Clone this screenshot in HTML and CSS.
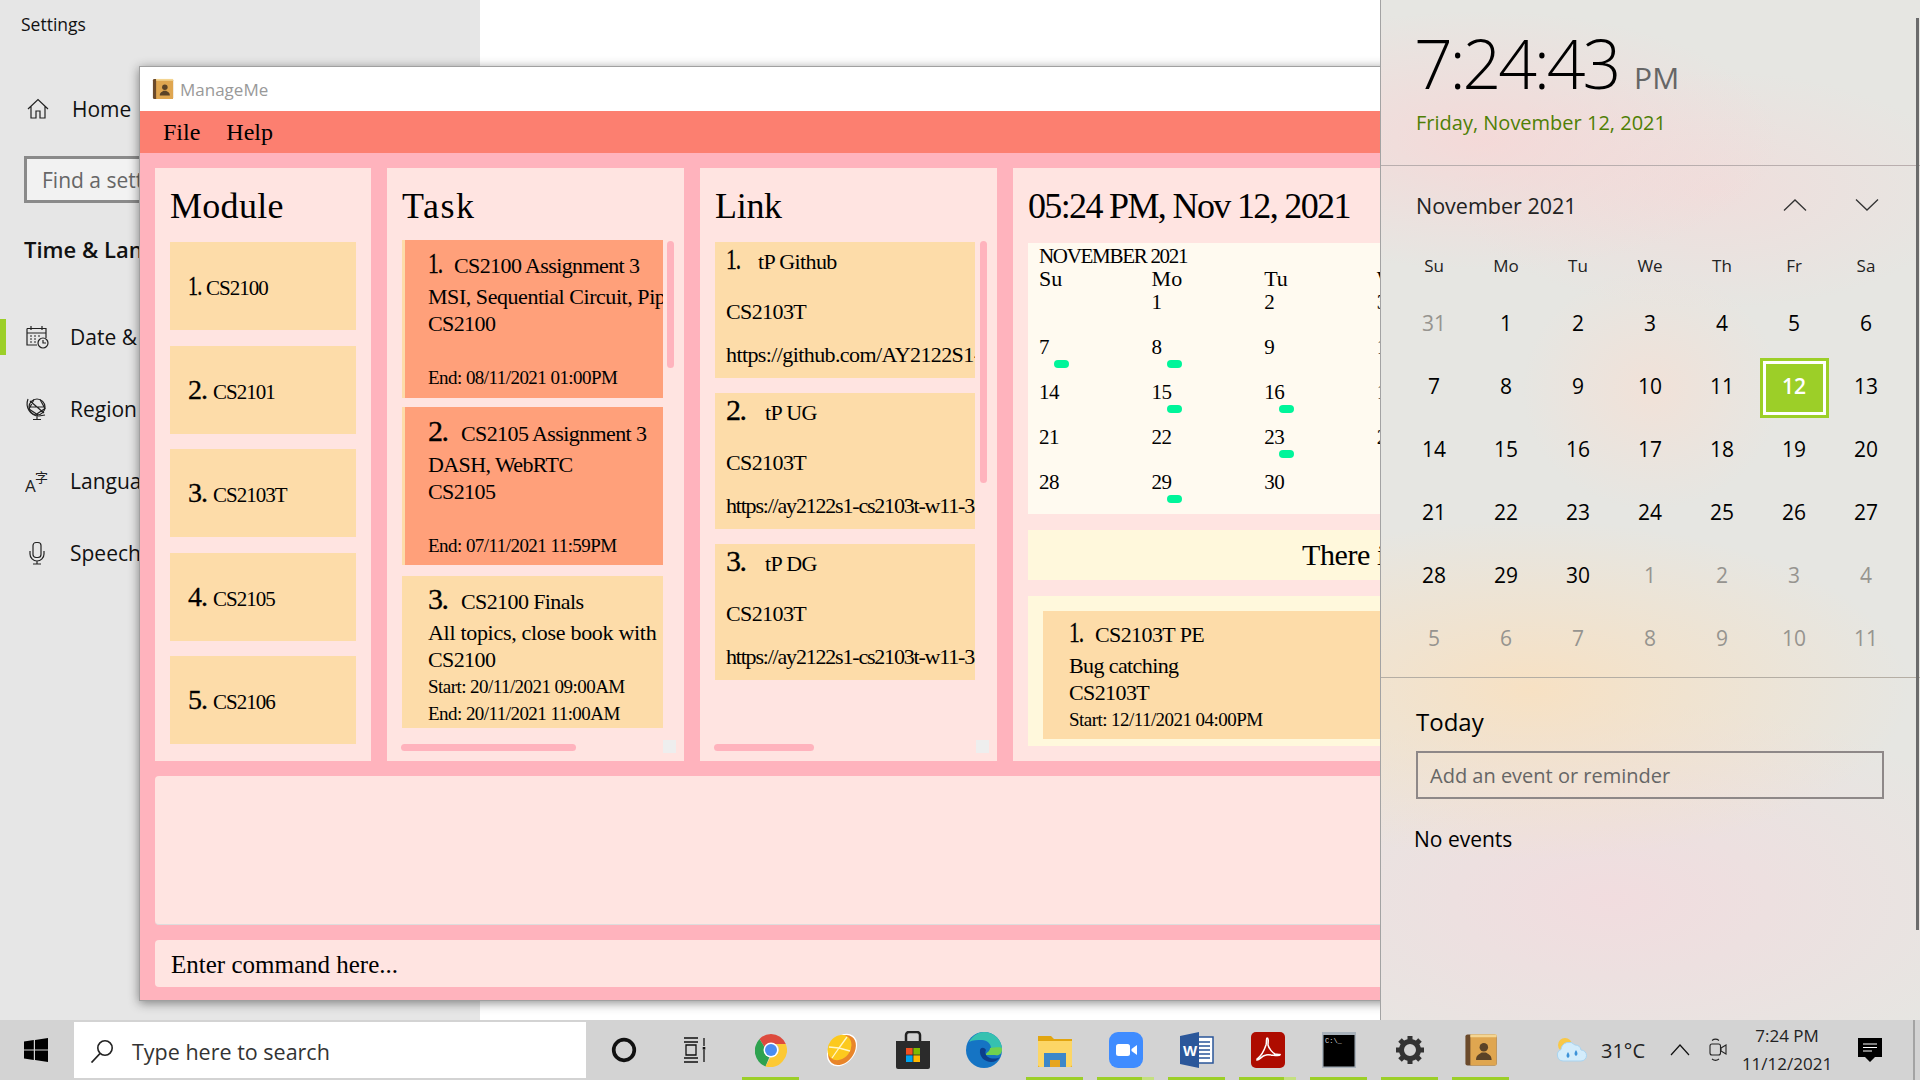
FILE: index.html
```html
<!DOCTYPE html>
<html lang="en">
  <head>
    <meta charset="UTF-8" />
    <meta name="viewport" content="width=device-width, initial-scale=1.0" />
    <title>ManageMe</title>
    <link rel="stylesheet" href="styles.css">
  </head>
  <body>
    <svg class="defs" aria-hidden="true">
      <symbol id="book" viewBox="0 0 24 24">
        <rect x="1" y="1" width="22" height="22" rx="1.5" fill="#6b4a2b" />
        <rect x="4.500" y="1" width="18.500" height="22" rx="1" fill="#dfa650" />
        <rect x="4.500" y="1" width="18.500" height="2" fill="#f4d592" />
        <circle cx="14" cy="10" r="3" fill="#5b4327" />
        <path d="M8.500 19c0-3.500 2.500-4 4-5.200h3c1.500 1.200 4 1.700 4 5.200z" fill="#5b4327" />
      </symbol>
    </svg>

    <!-- Settings behind everything -->
    <aside class="settings">
      <div class="settings-title">Settings</div>
      <div class="settings-home">
        <svg class="set-icon" viewBox="0 0 24 24"><path d="M2 12 12 2.500 22 12M5 9.500V21h5v-7h4v7h5V9.500" /></svg>
        <span>Home</span>
      </div>
      <div class="settings-search">Find a setting</div>
      <div class="settings-group">Time &amp; Language</div>
      <nav class="settings-nav">
        <div class="nav-row active">
          <svg class="set-icon" viewBox="0 0 24 24"><path d="M2 3.500h19V13M2 3.500V20h10M2 8h19M6 1v4M17 1v4" /><circle cx="18" cy="18" r="5" /><path d="M18 15v3h3M5 11h2M9 11h2M13 11h2M5 14h2M9 14h2M5 17h2M9 17h2" /></svg>
          <span>Date &amp; time</span>
        </div>
        <div class="nav-row">
          <svg class="set-icon" viewBox="0 0 24 24"><circle cx="12" cy="10" r="8" /><path d="M5 4 19 16M9 2.500 4 12l9 6M15 2.500l5 9-9 6M4 10h16M3 2c-3 8 2 17 11 17l6-1M12 19v3M8 22.500h8" /></svg>
          <span>Region</span>
        </div>
        <div class="nav-row">
          <svg class="set-icon lang-icon" viewBox="0 0 24 24"><text x="0" y="23" class="lang-a">A</text><text x="10" y="13" class="lang-zi">字</text></svg>
          <span>Language</span>
        </div>
        <div class="nav-row">
          <svg class="set-icon" viewBox="0 0 24 24"><rect x="8" y="1.500" width="8" height="15" rx="3" /><path d="M5 10v3a6.500 6.500 0 0 0 14 0v-3M12 19.500V23M8 23h8" /></svg>
          <span>Speech</span>
        </div>
      </nav>
    </aside>

    <!-- ManageMe window -->
    <main class="window">
      <header class="titlebar">
        <svg class="title-icon"><use href="#book" /></svg>
        <span>ManageMe</span>
      </header>
      <div class="menubar">
        <span>File</span>
        <span>Help</span>
      </div>
      <div class="app-body">
        <div class="panels">
          <section class="panel module-panel">
            <h2>Module</h2>
            <div class="module-card"><span class="m-num one">1.</span><span class="m-name">CS2100</span></div>
            <div class="module-card"><span class="m-num">2.</span><span class="m-name">CS2101</span></div>
            <div class="module-card"><span class="m-num">3.</span><span class="m-name">CS2103T</span></div>
            <div class="module-card"><span class="m-num">4.</span><span class="m-name">CS2105</span></div>
            <div class="module-card"><span class="m-num">5.</span><span class="m-name">CS2106</span></div>
          </section>

          <section class="panel task-panel">
            <h2>Task</h2>
            <div class="task-list">
              <div class="task overdue">
                <div class="row"><span class="num one">1.</span><span class="row-title">CS2100 Assignment 3</span></div>
                <div class="line desc">MSI, Sequential Circuit, Pipeline</div>
                <div class="line">CS2100</div>
                <div class="line"></div>
                <div class="line small">End: 08/11/2021 01:00PM</div>
              </div>
              <div class="task overdue">
                <div class="row"><span class="num">2.</span><span class="row-title">CS2105 Assignment 3</span></div>
                <div class="line">DASH, WebRTC</div>
                <div class="line">CS2105</div>
                <div class="line"></div>
                <div class="line small">End: 07/11/2021 11:59PM</div>
              </div>
              <div class="task plain">
                <div class="row"><span class="num">3.</span><span class="row-title">CS2100 Finals</span></div>
                <div class="line wide">All topics, close book with</div>
                <div class="line">CS2100</div>
                <div class="line small">Start: 20/11/2021 09:00AM</div>
                <div class="line small">End: 20/11/2021 11:00AM</div>
              </div>
            </div>
            <div class="vbar task-vbar"></div>
            <div class="hbar task-hbar"></div>
            <div class="corner"></div>
          </section>

          <section class="panel link-panel">
            <h2>Link</h2>
            <div class="link-card">
              <div class="link-row"><span class="num one">1.</span><span class="row-title">tP Github</span></div>
              <div class="line">CS2103T</div>
              <div class="line url">https://github.com/AY2122S1-CS2103T-W11-3/tp</div>
            </div>
            <div class="link-card">
              <div class="link-row"><span class="num">2.</span><span class="row-title">tP UG</span></div>
              <div class="line">CS2103T</div>
              <div class="line url tight">https://ay2122s1-cs2103t-w11-3.github.io/tp/UserGuide.html</div>
            </div>
            <div class="link-card">
              <div class="link-row"><span class="num">3.</span><span class="row-title">tP DG</span></div>
              <div class="line">CS2103T</div>
              <div class="line url tight">https://ay2122s1-cs2103t-w11-3.github.io/tp/DeveloperGuide.html</div>
            </div>
            <div class="vbar link-vbar"></div>
            <div class="hbar link-hbar"></div>
            <div class="corner"></div>
          </section>

          <section class="panel date-panel">
            <h2 class="now">05:24 PM, Nov 12, 2021</h2>
            <div class="app-cal">
              <div class="app-cal-month">NOVEMBER 2021</div>
              <div class="app-cal-grid">
                <b>Su</b><b>Mo</b><b>Tu</b><b>We</b><b>Th</b><b>Fr</b><b>Sa</b>
                <i></i><i>1</i><i>2</i><i>3</i><i>4</i><i>5</i><i>6</i>
                <i>7<u></u></i><i>8<u></u></i><i>9</i><i>10</i><i>11</i><i>12</i><i>13</i>
                <i>14</i><i>15<u></u></i><i>16<u></u></i><i>17</i><i>18</i><i>19</i><i>20</i>
                <i>21</i><i>22</i><i>23<u></u></i><i>24</i><i>25</i><i>26</i><i>27</i>
                <i>28</i><i>29<u></u></i><i>30</i>
              </div>
            </div>
            <div class="banner">There is 1 event today</div>
            <div class="events">
              <div class="event-card">
                <div class="row"><span class="num one">1.</span><span class="row-title">CS2103T PE</span></div>
                <div class="line">Bug catching</div>
                <div class="line">CS2103T</div>
                <div class="line small">Start: 12/11/2021 04:00PM</div>
              </div>
            </div>
          </section>
        </div>
        <div class="result"></div>
        <div class="command">Enter command here...</div>
      </div>
    </main>

    <!-- Clock flyout -->
    <aside class="flyout">
      <div class="clock">
        <div class="clock-time">7:24:43<span class="clock-pm">PM</span></div>
        <div class="clock-date">Friday, November 12, 2021</div>
      </div>
      <div class="month-row">
        <span>November 2021</span>
        <div class="month-nav">
          <svg viewBox="0 0 24 12"><path d="M1 11.500 12 1l11 10.500" /></svg>
          <svg viewBox="0 0 24 12"><path d="M1 .5 12 11 23 .5" /></svg>
        </div>
      </div>
      <div class="week-head">
        <span>Su</span><span>Mo</span><span>Tu</span><span>We</span><span>Th</span><span>Fr</span><span>Sa</span>
      </div>
      <div class="days">
        <span class="off">31</span><span>1</span><span>2</span><span>3</span><span>4</span><span>5</span><span>6</span>
        <span>7</span><span>8</span><span>9</span><span>10</span><span>11</span><span class="today">12</span><span>13</span>
        <span>14</span><span>15</span><span>16</span><span>17</span><span>18</span><span>19</span><span>20</span>
        <span>21</span><span>22</span><span>23</span><span>24</span><span>25</span><span>26</span><span>27</span>
        <span>28</span><span>29</span><span>30</span><span class="off">1</span><span class="off">2</span><span class="off">3</span><span class="off">4</span>
        <span class="off">5</span><span class="off">6</span><span class="off">7</span><span class="off">8</span><span class="off">9</span><span class="off">10</span><span class="off">11</span>
      </div>
      <div class="agenda">
        <div class="agenda-title">Today</div>
        <div class="agenda-input">Add an event or reminder</div>
        <div class="agenda-empty">No events</div>
      </div>
      <div class="flyout-edge"></div>
    </aside>

    <!-- Taskbar -->
    <footer class="taskbar">
      <div class="start">
        <svg viewBox="0 0 24 24" width="24" height="24"><path d="M0 3.400 9.800 2v9.500H0zM11 1.900 24 0v11.500H11zM0 12.600h9.800V22L0 20.600zM11 12.600h13V24l-13-1.900z" fill="#000" /></svg>
      </div>
      <div class="search">
        <svg viewBox="0 0 24 24" width="24" height="24"><circle cx="15" cy="9" r="7.200" fill="none" stroke="#222" stroke-width="1.600" /><path d="M10 14.500 1.500 23.500" stroke="#222" stroke-width="1.800" /></svg>
        <span>Type here to search</span>
      </div>
      <div class="slot first">
        <svg viewBox="0 0 24 24" width="26" height="26"><circle cx="12" cy="12" r="9.500" fill="none" stroke="#111" stroke-width="3.400" /></svg>
      </div>
      <div class="slot">
        <svg viewBox="0 0 24 26" width="24" height="26" fill="none" stroke="#111" stroke-width="1.300"><path d="M1 1h14M1 25h14M1 5h14M1 21h14M3 8h10v10H3zM21 1v8M21 13v12" /><rect x="19.700" y="10" width="2.600" height="2.600" fill="#111" stroke="none" /></svg>
      </div>

      <div class="slot app open chrome">
        <svg viewBox="0 0 32 34" width="32" height="34">
          <path d="M16 1a16 16 0 0 1 14.800 10H16a6 6 0 0 0-6 4L4.500 6A16 16 0 0 1 16 1z" fill="#dd4b3e" />
          <path d="M4.500 6 10 15a6 6 0 0 0 5 7.500l-4.500 11A17 17 0 0 1 4.500 6z" fill="#2ea24f" />
          <path d="M30.800 11A17 17 0 0 1 10.500 33.500L16 23a6.500 6.500 0 0 0 4.500-12z" fill="#fcc934" />
          <circle cx="16" cy="17" r="7.500" fill="#fff" /><circle cx="16" cy="17" r="6" fill="#4a8df0" />
        </svg>
      </div>
      <div class="slot app">
        <svg viewBox="0 0 36 36" width="36" height="36">
          <ellipse cx="18" cy="18" rx="13" ry="18" transform="rotate(38 18 18)" fill="#fff" />
          <ellipse cx="18" cy="18" rx="12" ry="16.500" transform="rotate(38 18 18)" fill="#e8852a" />
          <ellipse cx="15.500" cy="15.500" rx="11" ry="13.500" transform="rotate(38 15.500 15.500)" fill="#fcc91e" />
          <path d="M15 16 23 5M15 16 5 15M15 16 8 26M15 16l11 3" stroke="#fff6c8" stroke-width="1.300" />
        </svg>
      </div>
      <div class="slot app">
        <svg viewBox="0 0 36 38" width="36" height="38">
          <path d="M11 11V4a3 3 0 0 1 3-3h8a3 3 0 0 1 3 3v7" fill="none" stroke="#222" stroke-width="2.500" />
          <path d="M1 10h34v26a2 2 0 0 1-2 2H3a2 2 0 0 1-2-2z" fill="#2b2b2b" />
          <rect x="11" y="17" width="6.600" height="6.600" fill="#f25022" /><rect x="18.400" y="17" width="6.600" height="6.600" fill="#7fba00" />
          <rect x="11" y="24.400" width="6.600" height="6.600" fill="#00a4ef" /><rect x="18.400" y="24.400" width="6.600" height="6.600" fill="#ffb900" />
        </svg>
      </div>
      <div class="slot app">
        <svg viewBox="0 0 36 36" width="36" height="36">
          <circle cx="18" cy="18" r="18" fill="#1574c4" />
          <path d="M3 10C7 3 13 0 18 0c9 0 18 7 18 17 0 4-3 6-7 6h-9c0-3 5-3 5-7 0-4-4-8-9-8-5 0-9 0-13 2z" fill="#35c1b0" />
          <path d="M24 16c4 0 12-2 12 1 0 5-3 7-7 6h-9c0-3 4-3 4-7z" fill="#6fd14f" />
          <path d="M14 18c-1 7 5 12 11 12 4 0 7-2 9-5-3 2-9 2-12 0-3-2-3-5-2-7-2-3-5-3-6 0z" fill="#0c3f8c" />
        </svg>
      </div>
      <div class="slot app open">
        <svg viewBox="0 0 34 34" width="34" height="34">
          <path d="M0 3h13l3 3h18v28H0z" fill="#e2a50f" />
          <path d="M0 8h34v24a2 2 0 0 1-2 2H2a2 2 0 0 1-2-2z" fill="#fcd666" />
          <path d="M6 34V20h22v14h-6v-7H12v7z" fill="#3c87c9" />
          <rect x="12" y="27" width="10" height="7" fill="#e6a51e" />
        </svg>
      </div>
      <div class="slot app open stack">
        <svg viewBox="0 0 34 36" width="34" height="36">
          <rect width="34" height="36" rx="9" fill="#3f8cff" />
          <rect x="7" y="12" width="14" height="12" rx="2.500" fill="#fff" />
          <path d="M22.500 17 28 13v10l-5.500-4z" fill="#fff" />
        </svg>
      </div>
      <div class="slot app open">
        <svg viewBox="0 0 34 36" width="34" height="36">
          <rect x="14" y="5" width="19" height="26" fill="#fff" stroke="#2a5699" stroke-width="1.500" />
          <path d="M18 10h12M18 14h12M18 18h12M18 22h12M18 26h12" stroke="#2a5699" stroke-width="1.600" />
          <path d="M0 4 19 0v36L0 32z" fill="#2b579a" />
          <text x="3" y="24" class="word-w">W</text>
        </svg>
      </div>
      <div class="slot app open stack">
        <svg viewBox="0 0 34 36" width="34" height="36">
          <rect width="34" height="36" rx="5" fill="#ae0c00" />
          <path d="M6 27c3-2 7-8 9-14 1-4 0-7 1-7 2 0 1 5 1 7 1 4 5 8 7 9 3 1 6 0 5 1-1 2-10-1-14 0-5 1-6 5-9 5z" fill="none" stroke="#fff" stroke-width="1.500" />
        </svg>
      </div>
      <div class="slot app open">
        <svg viewBox="0 0 34 36" width="34" height="36">
          <rect width="34" height="36" fill="#a9b2bb" />
          <rect x="1.500" y="3" width="31" height="31.500" fill="#000" />
          <text x="3" y="11" class="cmd-text">C:\_</text>
        </svg>
      </div>
      <div class="slot app open">
        <svg viewBox="0 0 30 30" width="30" height="30">
          <circle cx="15" cy="15" r="8.500" fill="none" stroke="#333" stroke-width="5" />
          <path d="M15 1v5M15 24v5M1 15h5M24 15h5M5 5l3.500 3.500M21.500 21.500 25 25M25 5l-3.500 3.500M8.500 21.500 5 25" stroke="#333" stroke-width="5" />
        </svg>
      </div>
      <div class="slot app open">
        <svg width="34" height="34"><use href="#book" /></svg>
      </div>

      <div class="tray">
        <div class="tray-weather">
          <svg viewBox="0 0 32 26" width="32" height="26">
            <circle cx="10" cy="8" r="7" fill="#f9c846" />
            <path d="M8 24a6 6 0 0 1-2-11.500A8 8 0 0 1 20 8a6 6 0 0 1 6 5 5.500 5.500 0 0 1 0 11z" fill="#d3ecfb" stroke="#a9d4f0" />
            <path d="M13 15c2 3 2 5 0 6-2-1-2-3 0-6zM21 13c2 3 2 5 0 6-2-1-2-3 0-6z" fill="#3d92d8" />
          </svg>
        </div>
        <div class="tray-temp">31°C</div>
        <div class="tray-icon">
          <svg viewBox="0 0 20 12" width="20" height="12" fill="none" stroke="#111" stroke-width="1.200"><path d="M1 11 10 1l9 10" /></svg>
        </div>
        <div class="tray-icon">
          <svg viewBox="0 0 18 24" width="18" height="24" fill="none" stroke="#222" stroke-width="1.100"><rect x="1" y="6" width="10.500" height="11" rx="2" /><path d="m12 10 5-3v9l-5-3zM3 2.500C5 1 8 1 10 2.500M3 21c2 1.500 5 1.500 7 0" /></svg>
        </div>
        <div class="tray-clock">
          <div>7:24 PM</div>
          <div>11/12/2021</div>
        </div>
        <div class="tray-icon notif">
          <svg viewBox="0 0 24 24" width="24" height="24"><path d="M0 0h24v19h-7l-5 5-5-5H0z" fill="#000" /><path d="M5 6h14M5 9.500h14M5 13h9" stroke="#fff" /></svg>
        </div>
        <div class="tray-edge"></div>
      </div>
    </footer>
  </body>
</html>
```

FILE: styles.css
```css
* {
  box-sizing: border-box;
}

html,
body {
  margin: 0;
  height: 100%;
}

body {
  position: relative;
  width: 1920px;
  height: 1080px;
  overflow: hidden;
  background: #fff;
  font-family: "Open Sans", sans-serif;
  color: #000;
}

.defs {
  position: absolute;
  width: 0;
  height: 0;
}

/* Settings window */
.settings {
  position: absolute;
  left: 0;
  top: 0;
  width: 480px;
  height: 1020px;
  background: #e6e6e6;
  font-size: 21px;
  color: #111;
}

.settings-title {
  padding: 13px 0 0 21px;
  font-size: 17.5px;
  line-height: 22px;
}

.settings-home {
  display: flex;
  align-items: center;
  gap: 22px;
  margin-top: 56px;
  padding-left: 26px;
  height: 36px;
}

.set-icon {
  width: 24px;
  height: 24px;
  flex: none;
  fill: none;
  stroke: #222;
  stroke-width: 1.2;
}

.settings-search {
  width: 300px;
  height: 47px;
  margin: 29px 0 0 24px;
  padding-left: 15px;
  border: 3px solid #8a8a8a;
  background: #f2f2f2;
  color: #666;
  line-height: 43px;
}

.settings-group {
  margin: 32px 0 0 24px;
  font-size: 22px;
  font-weight: 600;
  line-height: 28px;
}

.settings-nav {
  margin-top: 38px;
}

.nav-row {
  display: flex;
  align-items: center;
  gap: 21px;
  height: 72px;
  padding-left: 25px;
}

.nav-row.active {
  position: relative;
}

.nav-row.active::before {
  content: "";
  position: absolute;
  left: 0;
  top: 18px;
  width: 6px;
  height: 36px;
  background: #9ccf28;
}

.lang-a {
  font-size: 17px;
  fill: #222;
  stroke: none;
}

.lang-zi {
  font-family: "Noto Sans CJK SC", sans-serif;
  font-size: 13px;
  fill: #222;
  stroke: none;
}

/* ManageMe window */
.window {
  position: absolute;
  left: 139px;
  top: 66px;
  width: 1500px;
  height: 935px;
  border: 1px solid #a0a0a0;
  background: #ffb3bd;
  box-shadow: 0 2px 10px rgba(0, 0, 0, 0.45);
  font-family: "Liberation Serif", serif;
}

.titlebar {
  display: flex;
  align-items: center;
  gap: 6px;
  height: 44px;
  padding-left: 12px;
  background: #fff;
  font-family: "Open Sans", sans-serif;
  font-size: 17px;
  color: #999;
}

.title-icon {
  width: 22px;
  height: 22px;
}

.menubar {
  display: flex;
  gap: 26px;
  height: 42px;
  padding-left: 23px;
  background: #fc7f70;
  font-size: 24px;
  line-height: 42px;
}

.app-body {
  padding: 15px;
}

.panels {
  display: flex;
  gap: 16px;
  height: 593px;
}

.panel {
  position: relative;
  background: #ffe4e1;
  padding: 18px 15px 0;
  overflow: hidden;
}

.panel h2 {
  margin: 0;
  font-size: 36px;
  font-weight: 400;
  line-height: 40px;
  letter-spacing: -0.3px;
}

.module-panel {
  width: 216px;
}

.module-panel h2 {
  margin-bottom: 16px;
  letter-spacing: 0.3px;
}

.task-panel,
.link-panel {
  width: 297px;
}

.task-panel h2 {
  letter-spacing: 1.5px;
}

.date-panel {
  flex: 1;
}

.module-card {
  height: 88px;
  margin-bottom: 15.5px;
  padding-left: 18px;
  background: #fddca9;
  font-size: 28px;
  line-height: 88px;
  white-space: nowrap;
}

.m-num {
  display: inline-block;
  width: 25px;
  letter-spacing: -1px;
  -webkit-text-stroke: 0.3px #000;
}

.m-num.one {
  width: 18px;
}

/* the app's font has a narrow one */
.m-num.one,
.num.one {
  transform: scaleX(0.72);
  transform-origin: left;
}

.m-name {
  font-size: 21px;
  letter-spacing: -1px;
}

/* shared text rows for tasks, links and events */
.row {
  display: flex;
  align-items: baseline;
  height: 43px;
  padding-top: 8px;
  line-height: 30px;
}

.num {
  width: 33px;
  flex: none;
  font-size: 30px;
  letter-spacing: -1.5px;
  -webkit-text-stroke: 0.3px #000;
}

.num.one {
  width: 26px;
}

.row-title {
  font-size: 22px;
  letter-spacing: -0.6px;
}

.line {
  height: 27px;
  font-size: 22px;
  line-height: 27px;
  letter-spacing: -0.6px;
  white-space: nowrap;
}

.line.small {
  font-size: 19px;
  letter-spacing: -0.55px;
}

.line.desc {
  letter-spacing: -0.45px;
}

.line.wide {
  letter-spacing: -0.3px;
}

.task-list {
  display: flex;
  flex-direction: column;
  gap: 9px;
  width: 261px;
  height: 490px;
  margin-top: 14px;
  overflow: hidden;
}

.task {
  flex: none;
  height: 158px;
  padding: 0 0 0 23px;
  border-left: 3px solid #fddca9;
  overflow: hidden;
}

.task + .task {
  padding-top: 1px;
}

.task.overdue {
  background: #ffa07a;
}

.task.plain {
  margin-top: 2px;
  background: #fddca9;
  height: 152px;
}

.task.plain .row {
  height: 42px;
  padding-top: 7px;
}

.link-panel h2 {
  margin-bottom: 16px;
}

.link-card {
  width: 260px;
  height: 136px;
  margin: 0 0 15px;
  padding-left: 11px;
  background: #fddca9;
  overflow: hidden;
}

.link-row {
  display: flex;
  align-items: baseline;
  height: 56px;
  padding-top: 2px;
  line-height: 30px;
}

.link-row .num {
  width: 39px;
}

.link-row .num.one {
  width: 32px;
}

.line.url {
  margin-top: 15.5px;
}

.line.url.tight {
  letter-spacing: -1.2px;
}

/* fake javafx scrollbars */
.vbar {
  position: absolute;
  top: 73px;
  width: 7px;
  border-radius: 4px;
  background: #ffb3bd;
}

.task-vbar {
  left: 280px;
  height: 127px;
}

.link-vbar {
  left: 280px;
  height: 242px;
}

.hbar {
  position: absolute;
  top: 576px;
  left: 14px;
  height: 7px;
  border-radius: 4px;
  background: #ffb3bd;
}

.task-hbar {
  width: 175px;
}

.link-hbar {
  width: 100px;
}

.corner {
  position: absolute;
  left: 276px;
  top: 572px;
  width: 13px;
  height: 13px;
  background: #eee;
}

/* date panel */
.date-panel h2.now {
  letter-spacing: -1.65px;
  white-space: nowrap;
}

.app-cal {
  height: 271px;
  margin-top: 17px;
  padding: 1px 0 0 11px;
  background: #fffaf0;
  overflow: hidden;
}

.app-cal-month {
  font-size: 21px;
  line-height: 24px;
  letter-spacing: -1.3px;
}

.app-cal-grid {
  display: grid;
  grid-template-columns: repeat(7, 112.6px);
  grid-template-rows: 22px repeat(5, 45px);
  font-size: 21px;
  line-height: 24px;
}

.app-cal-grid b {
  font-weight: 400;
  font-size: 22px;
  line-height: 22px;
}

.app-cal-grid i {
  font-style: normal;
  letter-spacing: -0.5px;
}

.app-cal-grid u {
  display: block;
  width: 15px;
  height: 8px;
  margin: 1px 0 0 15px;
  border-radius: 4px;
  background: #00f59a;
}

.banner {
  height: 50px;
  margin-top: 16px;
  padding-left: 274px;
  background: #fff8dc;
  font-size: 30px;
  line-height: 50px;
  letter-spacing: -0.4px;
  white-space: nowrap;
}

.events {
  height: 150px;
  margin-top: 16px;
  padding: 15px 0 0 15px;
  background: #fff8dc;
}

.event-card {
  height: 128px;
  padding-left: 26px;
  background: #fddca9;
  margin-right: -1px;
}

.event-card .row {
  height: 41px;
  padding-top: 6px;
}

.result {
  height: 149px;
  margin-top: 15px;
  border-bottom: 1px solid #ddd;
  border-radius: 4px;
  background: #ffe4e1;
}

.command {
  height: 47px;
  margin-top: 15px;
  padding-left: 16px;
  border-radius: 4px;
  background: #ffe4e1;
  font-size: 25px;
  line-height: 49px;
}

/* Clock flyout */
.flyout {
  position: absolute;
  left: 1380px;
  top: 0;
  width: 540px;
  height: 1020px;
  border-left: 1px solid #a3a3a3;
  background:
    radial-gradient(ellipse 300px 130px at 100px 140px, rgba(250, 212, 212, 0.7), transparent),
    radial-gradient(ellipse 260px 120px at 330px 190px, rgba(248, 214, 214, 0.5), transparent),
    radial-gradient(ellipse 130px 120px at 270px 390px, rgba(250, 222, 208, 0.55), transparent),
    radial-gradient(ellipse 380px 170px at 150px 690px, rgba(250, 224, 190, 0.85), transparent),
    radial-gradient(ellipse 420px 200px at 230px 900px, rgba(244, 218, 222, 0.8), transparent),
    #e6e6e2;
  font-size: 20px;
}

.clock {
  height: 166px;
  padding: 17px 0 0 33px;
  border-bottom: 1px solid #b9aeae;
}

.clock-time {
  font-size: 68px;
  font-weight: 300;
  line-height: 92px;
  letter-spacing: -3.2px;
}

.clock-pm {
  margin-left: 16px;
  font-size: 30px;
  font-weight: 400;
  letter-spacing: 0;
  color: #666;
}

.clock-date {
  margin: -15px 0 0 2px;
  line-height: 28px;
  color: #4f7f05;
}

.month-row {
  display: flex;
  justify-content: space-between;
  align-items: center;
  height: 75px;
  padding: 10px 41px 7px 35px;
  font-size: 21.5px;
  color: #222;
}

.month-nav {
  display: flex;
  gap: 48px;
}

.month-nav svg {
  width: 24px;
  height: 12px;
  fill: none;
  stroke: #333;
  stroke-width: 1.3;
}

.week-head {
  display: grid;
  grid-template-columns: repeat(7, 72px);
  margin-left: 17px;
  height: 49px;
  align-items: center;
  justify-items: center;
  font-size: 17px;
  color: #222;
}

.days {
  display: grid;
  grid-template-columns: repeat(7, 72px);
  grid-auto-rows: 63px;
  margin-left: 17px;
  padding: 1px 0 8px;
  box-sizing: content-box;
  align-items: center;
  justify-items: center;
  font-size: 21px;
}

.days .off {
  color: #96948f;
}

.days .today {
  display: flex;
  align-items: center;
  justify-content: center;
  width: 69px;
  height: 60px;
  margin-top: 4px;
  padding-bottom: 4px;
  border: 3px solid #9ccf28;
  box-shadow: inset 0 0 0 3px #fff;
  background: #9ccf28;
  color: #fff;
  font-weight: 600;
}

.agenda {
  padding: 28px 0 0 35px;
  border-top: 1px solid #b5aea4;
}

.agenda-title {
  font-size: 24px;
  line-height: 32px;
}

.agenda-input {
  width: 468px;
  height: 48px;
  margin-top: 13px;
  padding-left: 12px;
  border: 2px solid #8e8888;
  color: #666;
  line-height: 46px;
}

.agenda-empty {
  margin: 26px 0 0 -2px;
  font-size: 21px;
  line-height: 28px;
}

.flyout-edge {
  position: absolute;
  left: 535px;
  top: 18px;
  width: 3px;
  height: 912px;
  background: #6b6b6b;
}

/* Taskbar */
.taskbar {
  position: absolute;
  left: 0;
  bottom: 0;
  display: flex;
  width: 1920px;
  height: 60px;
  background: #d3d3d3;
}

.start {
  display: flex;
  align-items: center;
  justify-content: center;
  width: 74px;
  padding-right: 2px;
}

.search {
  display: flex;
  align-items: center;
  gap: 18px;
  width: 512px;
  height: 56px;
  margin: 2px 2px 0 0;
  padding: 2px 0 0 16px;
  background: #fff;
  font-size: 21.5px;
  color: #333;
}

.slot {
  display: flex;
  align-items: center;
  justify-content: center;
  flex: none;
  width: 71px;
}

.slot.first {
  width: 71px;
}

.slot.app {
  width: 57px;
  margin: 0 7px;
}

.slot.chrome {
  margin-left: 12px;
}

.slot.open {
  background: linear-gradient(#9ccf28, #9ccf28) bottom / 100% 3px no-repeat;
}

.slot.stack {
  background: linear-gradient(to right, #9ccf28 79%, #c4e07f 79%) bottom / 100% 3px no-repeat;
}

.word-w {
  font-family: "Liberation Sans", sans-serif;
  font-size: 15px;
  font-weight: 700;
  fill: #fff;
}

.cmd-text {
  font-family: "Liberation Mono", monospace;
  font-size: 7px;
  fill: #ddd;
}

.tray {
  display: flex;
  align-items: center;
  margin-left: auto;
}

.tray-weather {
  display: flex;
  justify-content: center;
  width: 36px;
  margin-right: 12px;
}

.tray-temp {
  width: 60px;
  font-size: 20px;
  color: #222;
}

.tray-icon {
  display: flex;
  justify-content: center;
  width: 38px;
}

.tray-clock {
  width: 100px;
  font-size: 17px;
  line-height: 28px;
  text-align: center;
  color: #222;
}

.tray-icon.notif {
  width: 66px;
}

.tray-edge {
  width: 2px;
  height: 60px;
  margin: 0 5px 0 10px;
  background: #a3a3a3;
}
```
